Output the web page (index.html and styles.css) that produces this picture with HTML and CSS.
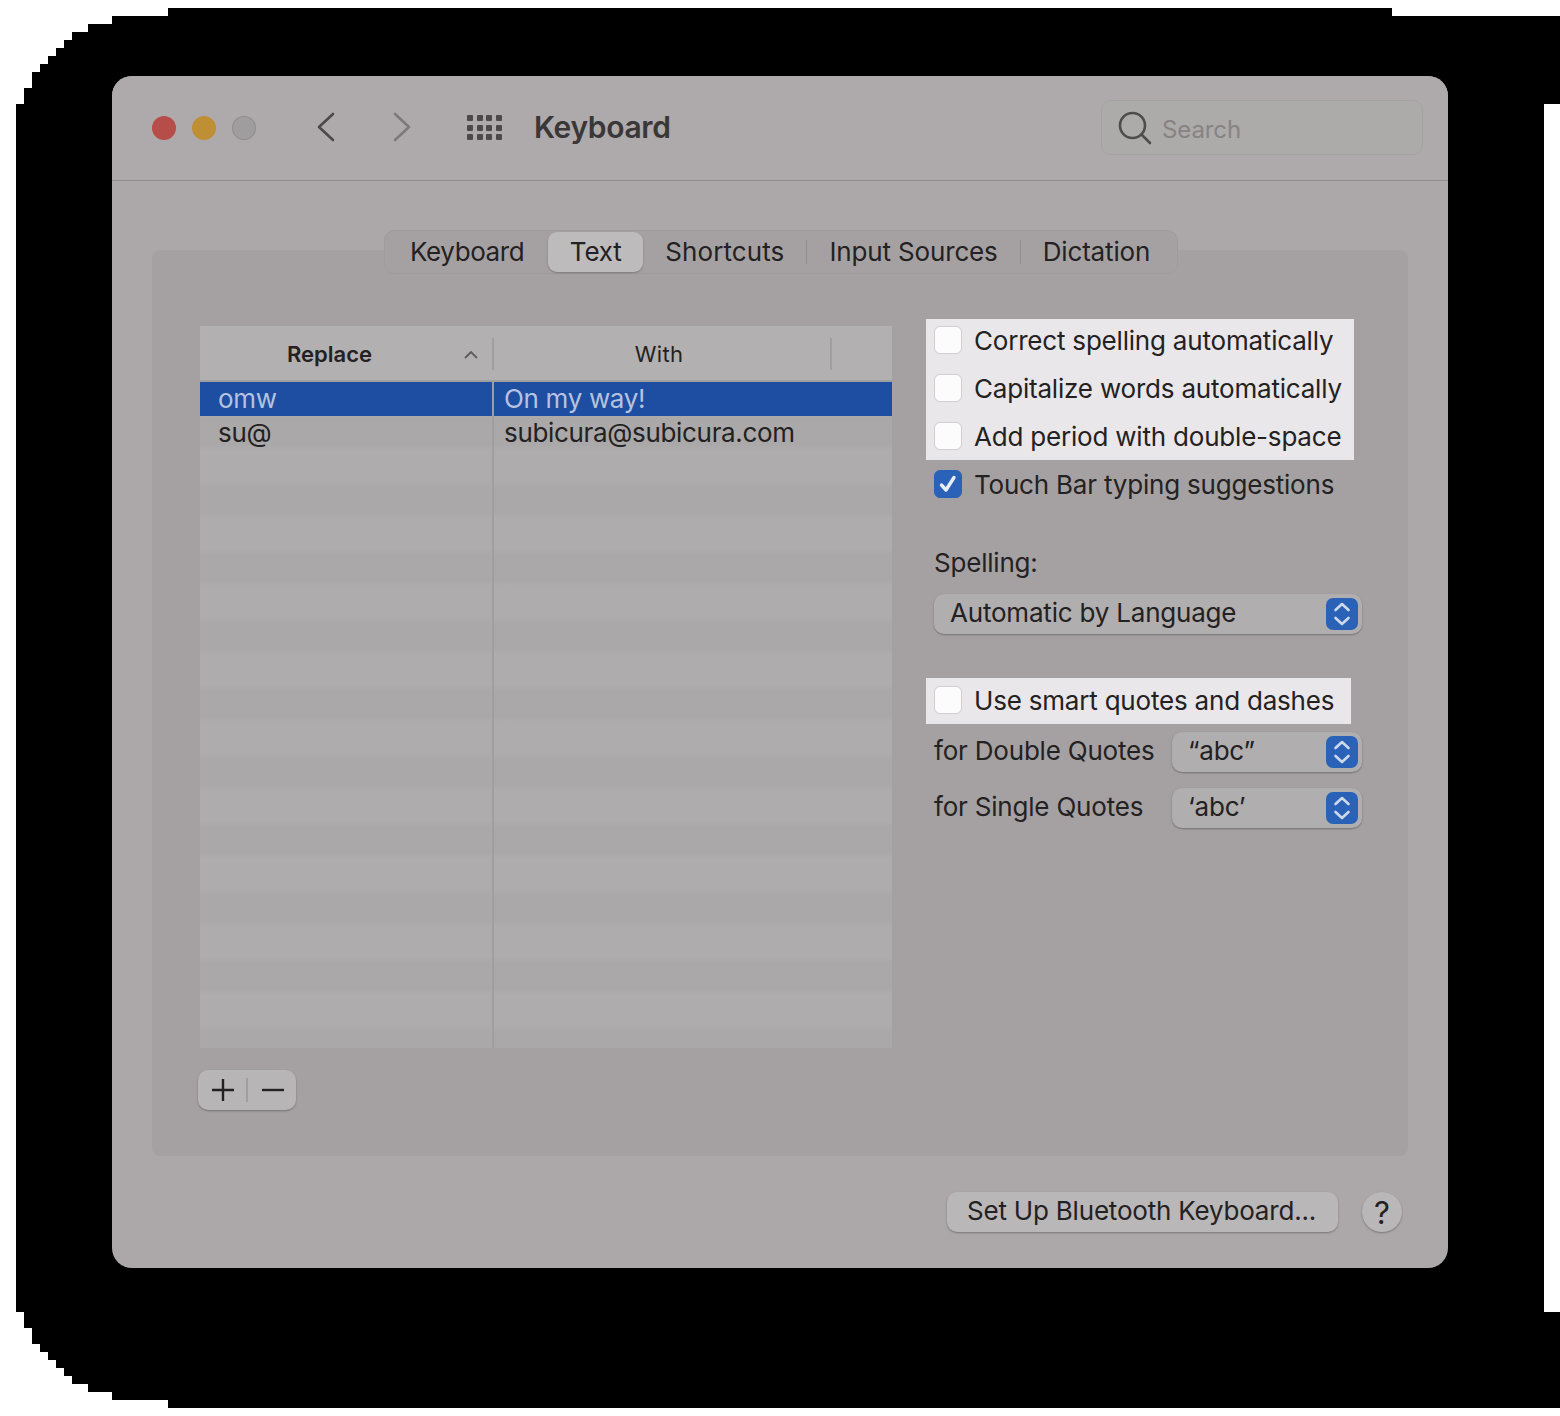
FILE: index.html
```html
<!DOCTYPE html>
<html lang="en">
<head>
<meta charset="utf-8">
<title>Keyboard</title>
<link rel="stylesheet" href="styles.css">
</head>
<body>
<div class="backdrop">
  <div class="window">
    <header class="titlebar">
      <div class="lights">
        <span class="light red"></span>
        <span class="light amber"></span>
        <span class="light grey"></span>
      </div>
      <svg class="nav back" width="20" height="30" viewBox="0 0 20 30"><path d="M17 2 L3 15 L17 28"/></svg>
      <svg class="nav forward" width="20" height="30" viewBox="0 0 20 30"><path d="M3 2 L17 15 L3 28"/></svg>
      <div class="grid-icon">
        <i></i><i></i><i></i><i></i><i></i><i></i><i></i><i></i><i></i><i></i><i></i><i></i>
      </div>
      <h1 class="title">Keyboard</h1>
      <div class="search">
        <svg class="search-icon" width="34" height="34" viewBox="0 0 34 34"><circle cx="14.5" cy="14.5" r="12.5"/><path d="M23.5 23.5 L32 32"/></svg>
        <span class="search-text">Search</span>
      </div>
    </header>
    <main class="content">
      <nav class="tabs">
        <span class="tab tab-first">Keyboard</span>
        <span class="tab tab-active">Text</span>
        <span class="tab tab-third">Shortcuts</span>
        <span class="tab-sep"></span>
        <span class="tab">Input Sources</span>
        <span class="tab-sep"></span>
        <span class="tab">Dictation</span>
      </nav>
      <section class="panel">
        <div class="left">
          <div class="table">
            <div class="thead">
              <div class="th th-replace">Replace
                <svg class="sort" width="14" height="9" viewBox="0 0 14 9"><path d="M1 8 L7 2 L13 8"/></svg>
              </div>
              <div class="th th-with">With</div>
              <div class="th th-rest"></div>
            </div>
            <div class="tbody">
              <div class="row selected"><span class="cell c1">omw</span><span class="cell c2">On my way!</span></div>
              <div class="row"><span class="cell c1">su@</span><span class="cell c2">subicura@subicura.com</span></div>
              <div class="col-line"></div>
            </div>
          </div>
          <div class="addremove">
            <svg class="ar-icon" width="24" height="24" viewBox="0 0 24 24"><path d="M12 1 V23 M1 12 H23"/></svg>
            <span class="ar-sep"></span>
            <svg class="ar-icon" width="24" height="24" viewBox="0 0 24 24"><path d="M1 12 H23"/></svg>
          </div>
        </div>
        <div class="right">
          <div class="hl hl-a">
            <label class="check"><span class="box"></span>Correct spelling automatically</label>
            <label class="check"><span class="box"></span>Capitalize words automatically</label>
            <label class="check"><span class="box"></span>Add period with double-space</label>
          </div>
          <label class="check touch"><span class="box box-on"><svg width="28" height="28" viewBox="0 0 28 28"><path d="M7.500 15 L12 20 L20 7.500"/></svg></span>Touch Bar typing suggestions</label>
          <div class="label spelling">Spelling:</div>
          <div class="select">
            <span class="select-text">Automatic by Language</span>
            <span class="stepper"><svg width="32" height="32" viewBox="0 0 32 32"><path d="M9.5 12 L16 6 L22.500 12 M9.500 20 L16 26 L22.500 20"/></svg></span>
          </div>
          <div class="hl hl-b">
            <label class="check"><span class="box"></span>Use smart quotes and dashes</label>
          </div>
          <div class="quote-row q1">
            <span class="label quote-label">for Double Quotes</span>
            <div class="select select-small">
              <span class="select-text">“abc”</span>
              <span class="stepper"><svg width="32" height="32" viewBox="0 0 32 32"><path d="M9.5 12 L16 6 L22.500 12 M9.500 20 L16 26 L22.500 20"/></svg></span>
            </div>
          </div>
          <div class="quote-row q2">
            <span class="label quote-label">for Single Quotes</span>
            <div class="select select-small">
              <span class="select-text">‘abc’</span>
              <span class="stepper"><svg width="32" height="32" viewBox="0 0 32 32"><path d="M9.5 12 L16 6 L22.500 12 M9.500 20 L16 26 L22.500 20"/></svg></span>
            </div>
          </div>
        </div>
      </section>
      <footer class="footer">
        <span class="button"><span class="button-text">Set Up Bluetooth Keyboard...</span></span>
        <span class="help">?</span>
      </footer>
    </main>
  </div>
</div>
</body>
</html>
```
FILE: styles.css
```css
* { box-sizing: border-box; }
html, body { margin: 0; padding: 0; background: #fff; }
body { height: 1416px; overflow: hidden; font-family: Inter, "Liberation Sans", sans-serif; color: #242122; }

.backdrop {
  width: 1560px;
  height: 1400px;
  margin-top: 8px;
  padding: 68px 112px 0;
  background: #000;
  clip-path: polygon(
    168px 0, 1392px 0, 1392px 8px, 1560px 8px, 1560px 96px, 1544px 96px,
    1544px 1304px, 1560px 1304px, 1560px 1400px, 168px 1400px,
    168px 1392px, 112px 1392px, 112px 1384px, 88px 1384px, 88px 1376px, 72px 1376px,
    72px 1368px, 64px 1368px, 64px 1360px, 56px 1360px, 56px 1352px, 48px 1352px,
    48px 1344px, 40px 1344px, 40px 1336px, 32px 1336px, 32px 1320px, 24px 1320px,
    24px 1304px, 16px 1304px, 16px 96px, 24px 96px, 24px 80px, 32px 80px,
    32px 64px, 40px 64px, 40px 56px, 48px 56px, 48px 48px, 56px 48px,
    56px 40px, 64px 40px, 64px 32px, 72px 32px, 72px 24px, 88px 24px,
    88px 16px, 112px 16px, 112px 8px, 168px 8px
  );
}

.window {
  width: 1336px;
  height: 1192px;
  border-radius: 20px;
  background: #aca8a9;
  overflow: hidden;
  display: flex;
  flex-direction: column;
}

/* title bar */
.titlebar {
  height: 105px;
  flex: none;
  display: flex;
  align-items: flex-start;
  background: #aeaaab;
  border-bottom: 1px solid #8f8c8d;
  padding-left: 40px;
}
.lights { display: flex; gap: 16px; margin-top: 40px; }
.light { width: 24px; height: 24px; border-radius: 50%; }
.red { background: #b64d49; }
.amber { background: #bf8f35; }
.grey { background: #a09d9e; box-shadow: inset 0 0 0 1px #918e8f; }
.nav { flex: none; margin-top: 36px; fill: none; stroke-width: 2.6; stroke-linecap: round; stroke-linejoin: round; }
.back { stroke: #4c494a; margin-left: 60px; }
.forward { stroke: #7d7a7b; margin-left: 56px; }
.grid-icon {
  display: grid;
  grid-template-columns: repeat(4, 6px);
  grid-auto-rows: 6px;
  gap: 3.5px 3.7px;
  margin: 39px 0 0 55px;
}
.grid-icon i { background: #4c494a; border-radius: 1px; }
.title { margin: 30px 0 0 32px; font-size: 30px; line-height: 42px; font-weight: 600; color: #3a3738; letter-spacing: -0.35px; }
.search {
  width: 322px;
  height: 55px;
  margin: 24px 25px 0 auto;
  border: 1px solid #a6a2a3;
  border-radius: 10px;
  display: flex;
  align-items: center;
  padding-left: 16px;
  background: #adaaaa;
}
.search-icon { fill: none; stroke: #4f4c4d; stroke-width: 2.6; stroke-linecap: round; flex: none; }
.search-text { margin: 3px 0 0 10px; font-size: 24px; letter-spacing: -0.1px; color: #878384; }

/* content */
.content { flex: 1; display: flex; flex-direction: column; padding: 49px 40px 0; }
.tabs {
  align-self: flex-start;
  width: 794px;
  margin-left: 232px;
  height: 44px;
  display: flex;
  align-items: center;
  padding: 0 0 0 3px;
  background: #a5a1a2;
  border: 1px solid #a09c9d;
  border-radius: 10px;
  font-size: 26px;
  letter-spacing: -0.15px;
  margin-bottom: -24px;
  position: relative;
  z-index: 1;
}
.tab { padding: 0 22px; line-height: 40px; }
.tab-first { letter-spacing: -0.4px; padding-right: 24px; }
.tab-active { background: #bdbbbc; border-radius: 9px; box-shadow: 0 1px 2px rgba(0,0,0,.25); padding: 0 21.5px; }
.tab-third { letter-spacing: 0.1px; }
.tab-sep { width: 1px; height: 24px; background: #8f8c8d; }

.panel {
  height: 906px;
  background: #a5a1a2;
  border-radius: 8px;
  padding: 76px 46px 0 48px;
  display: flex;
  justify-content: space-between;
}
.left { width: 692px; }

/* table */
.table { width: 692px; height: 722px; display: flex; flex-direction: column; }
.thead { height: 56px; flex: none; display: flex; background: #b2b0b0; border-bottom: 2px solid #a09e9e; font-size: 22px; }
.th { height: 54px; padding-top: 2px; display: flex; align-items: center; justify-content: center; position: relative; }
.th-replace { width: 294px; font-weight: 600; padding-right: 35px; }
.th-replace::after, .th-with::after {
  content: ""; position: absolute; right: 0; top: 12px; height: 32px; width: 2px; background: #a09e9e;
}
.th-with { width: 338px; padding-right: 8px; letter-spacing: .3px; }
.th-rest { flex: 1; }
.sort { position: absolute; right: 16px; top: 24px; fill: none; stroke: #5e5b5c; stroke-width: 1.8; }
.tbody {
  flex: 1;
  position: relative;
  background: repeating-linear-gradient(#aeacac 0 31px, #aaa8a8 37px 63px, #aeacac 68px);
  font-size: 26px;
  letter-spacing: -0.33px;
}
.row { height: 34px; padding-bottom: 2px; display: flex; align-items: center; }
.selected { background: #1d4ea2; color: #b6c2de; }
.cell { display: block; position: relative; z-index: 1; }
.c1 { width: 293px; padding-left: 18px; }
.c2 { padding-left: 11px; }
.col-line { position: absolute; left: 292px; top: 0; bottom: 0; width: 2px; background: #a09e9e; }

.addremove {
  width: 98px;
  height: 40px;
  margin: 22px 0 0 -2px;
  display: flex;
  align-items: center;
  background: #b7b5b6;
  border-radius: 10px;
  box-shadow: 0 1px 2px rgba(0,0,0,.3);
  padding-left: 13px;
}
.ar-icon { flex: none; fill: none; stroke: #242122; stroke-width: 2.4; }
.ar-sep { width: 2px; height: 24px; margin: 0 13px 0 11px; background: #a09e9e; }

/* right column */
.right { width: 428px; display: flex; flex-direction: column; letter-spacing: -0.2px; }
.check { display: flex; align-items: center; height: 28px; font-size: 26px; white-space: nowrap; }
.box { width: 28px; height: 28px; flex: none; margin-right: 12px; background: #fdfcfd; border: 1px solid #d0cecf; border-radius: 6px; }
.box-on { background: #2a62b8; border-color: #2a62b8; }
.box-on svg { display: block; margin: -1px; fill: none; stroke: #e7ecf5; stroke-width: 3.4; stroke-linecap: round; stroke-linejoin: round; }
.hl { background: #e9e7e9; margin-left: -8px; padding-left: 8px; display: flex; flex-direction: column; }
.hl-a { width: 428px; margin-top: -7px; padding-top: 7px; padding-bottom: 10px; gap: 20px; }
.hl-b { width: 425px; margin-top: 44px; padding-top: 8px; padding-bottom: 10px; }
.touch { margin-top: 10px; }
.label { font-size: 26px; line-height: 32px; white-space: nowrap; }
.quote-label { margin-top: -2px; }
.spelling { margin-top: 49px; }
.select {
  position: relative;
  height: 40px;
  margin-top: 15px;
  display: flex;
  align-items: center;
  background: #b0aeae;
  border-radius: 10px;
  box-shadow: 0 1px 2px rgba(0,0,0,.3);
  font-size: 26px;
  padding-left: 16px;
}
.select-text { white-space: nowrap; margin-top: -3px; }
.stepper { position: absolute; right: 4px; top: 4px; width: 32px; height: 32px; border-radius: 7px; background: #2a62b8; }
.stepper svg { display: block; fill: none; stroke: #cfd9ec; stroke-width: 2.6; stroke-linecap: round; stroke-linejoin: round; }
.quote-row { display: flex; align-items: center; justify-content: space-between; height: 40px; }
.q1 { margin-top: 8px; }
.q2 { margin-top: 16px; }
.select-small { width: 190px; margin-top: 0; }

/* footer */
.footer { display: flex; justify-content: flex-end; align-items: center; gap: 24px; margin-top: 36px; padding-right: 6px; }
.button {
  width: 391px;
  height: 40px;
  padding-right: 2px;
  display: flex;
  align-items: center;
  justify-content: center;
  background: #b9b7b8;
  border-radius: 10px;
  box-shadow: 0 1px 2px rgba(0,0,0,.3);
  font-size: 26px;
  letter-spacing: -0.2px;
}
.button-text { margin-top: -3px; }
.help {
  width: 40px;
  height: 40px;
  display: flex;
  align-items: center;
  justify-content: center;
  border-radius: 50%;
  background: #b9b7b8;
  box-shadow: 0 1px 2px rgba(0,0,0,.3);
  font-size: 31px;
}
```
